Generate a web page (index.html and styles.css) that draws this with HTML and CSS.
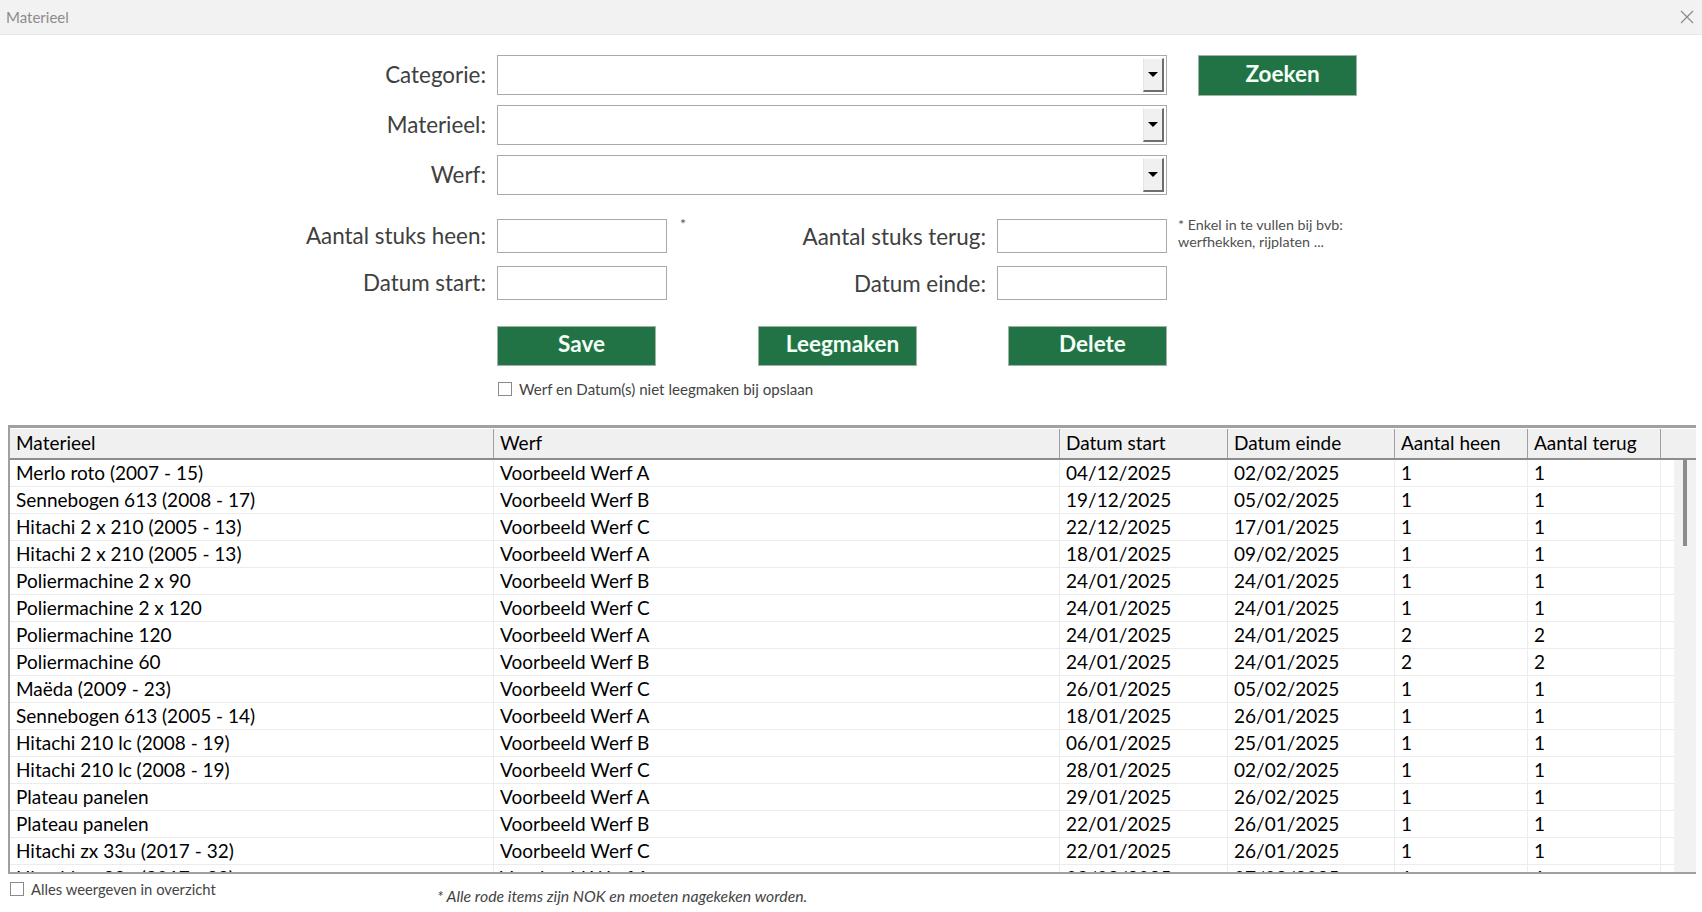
FILE: index.html
```html
<!DOCTYPE html>
<html lang="nl">
<head>
<meta charset="utf-8">
<title>Materieel</title>
<link rel="stylesheet" href="styles.css">
</head>
<body>
<div class="window">
  <div class="titlebar">
    <span class="title">Materieel</span>
    <svg class="close" width="14" height="14" viewBox="0 0 14 14"><path d="M1 1L13 13M13 1L1 13" stroke="#8a8a8a" stroke-width="1.2" fill="none"/></svg>
  </div>

  <div class="form">
    <div class="selrow">
      <label class="lbl">Categorie:</label>
      <div class="select"><span class="drop"><span class="arrow"></span></span></div>
      <button class="btn btn-zoek">Zoeken</button>
    </div>
    <div class="selrow">
      <label class="lbl">Materieel:</label>
      <div class="select"><span class="drop"><span class="arrow"></span></span></div>
    </div>
    <div class="selrow">
      <label class="lbl">Werf:</label>
      <div class="select"><span class="drop"><span class="arrow"></span></span></div>
    </div>

    <div class="numrow first">
      <label class="lbl">Aantal stuks heen:</label>
      <div class="input"></div>
      <div class="mid"><span class="star">*</span><label class="lbl2">Aantal stuks terug:</label></div>
      <div class="input"></div>
      <div class="note">* Enkel in te vullen bij bvb:<br>werfhekken, rijplaten ...</div>
    </div>
    <div class="numrow">
      <label class="lbl">Datum start:</label>
      <div class="input"></div>
      <div class="mid"><label class="lbl2">Datum einde:</label></div>
      <div class="input"></div>
    </div>

    <div class="btnrow">
      <button class="btn btn-save">Save</button>
      <button class="btn btn-leeg">Leegmaken</button>
      <button class="btn btn-del">Delete</button>
    </div>
    <div class="chkrow">
      <span class="chk"></span><span class="chktext">Werf en Datum(s) niet leegmaken bij opslaan</span>
    </div>
  </div>

  <div class="grid">
    <div class="ghead">
      <div class="c c1">Materieel</div>
      <div class="c c2">Werf</div>
      <div class="c c3">Datum start</div>
      <div class="c c4">Datum einde</div>
      <div class="c c5">Aantal heen</div>
      <div class="c c6">Aantal terug</div>
      <div class="c c7"></div>
    </div>
    <div class="gbody">
      <div class="rows">
        <div class="row"><div class="c c1">Merlo roto (2007 - 15)</div><div class="c c2">Voorbeeld Werf A</div><div class="c c3">04/12/2025</div><div class="c c4">02/02/2025</div><div class="c c5">1</div><div class="c c6">1</div></div>
        <div class="row"><div class="c c1">Sennebogen 613 (2008 - 17)</div><div class="c c2">Voorbeeld Werf B</div><div class="c c3">19/12/2025</div><div class="c c4">05/02/2025</div><div class="c c5">1</div><div class="c c6">1</div></div>
        <div class="row"><div class="c c1">Hitachi 2 x 210 (2005 - 13)</div><div class="c c2">Voorbeeld Werf C</div><div class="c c3">22/12/2025</div><div class="c c4">17/01/2025</div><div class="c c5">1</div><div class="c c6">1</div></div>
        <div class="row"><div class="c c1">Hitachi 2 x 210 (2005 - 13)</div><div class="c c2">Voorbeeld Werf A</div><div class="c c3">18/01/2025</div><div class="c c4">09/02/2025</div><div class="c c5">1</div><div class="c c6">1</div></div>
        <div class="row"><div class="c c1">Poliermachine 2 x 90</div><div class="c c2">Voorbeeld Werf B</div><div class="c c3">24/01/2025</div><div class="c c4">24/01/2025</div><div class="c c5">1</div><div class="c c6">1</div></div>
        <div class="row"><div class="c c1">Poliermachine 2 x 120</div><div class="c c2">Voorbeeld Werf C</div><div class="c c3">24/01/2025</div><div class="c c4">24/01/2025</div><div class="c c5">1</div><div class="c c6">1</div></div>
        <div class="row"><div class="c c1">Poliermachine 120</div><div class="c c2">Voorbeeld Werf A</div><div class="c c3">24/01/2025</div><div class="c c4">24/01/2025</div><div class="c c5">2</div><div class="c c6">2</div></div>
        <div class="row"><div class="c c1">Poliermachine 60</div><div class="c c2">Voorbeeld Werf B</div><div class="c c3">24/01/2025</div><div class="c c4">24/01/2025</div><div class="c c5">2</div><div class="c c6">2</div></div>
        <div class="row"><div class="c c1">Maëda (2009 - 23)</div><div class="c c2">Voorbeeld Werf C</div><div class="c c3">26/01/2025</div><div class="c c4">05/02/2025</div><div class="c c5">1</div><div class="c c6">1</div></div>
        <div class="row"><div class="c c1">Sennebogen 613 (2005 - 14)</div><div class="c c2">Voorbeeld Werf A</div><div class="c c3">18/01/2025</div><div class="c c4">26/01/2025</div><div class="c c5">1</div><div class="c c6">1</div></div>
        <div class="row"><div class="c c1">Hitachi 210 lc (2008 - 19)</div><div class="c c2">Voorbeeld Werf B</div><div class="c c3">06/01/2025</div><div class="c c4">25/01/2025</div><div class="c c5">1</div><div class="c c6">1</div></div>
        <div class="row"><div class="c c1">Hitachi 210 lc (2008 - 19)</div><div class="c c2">Voorbeeld Werf C</div><div class="c c3">28/01/2025</div><div class="c c4">02/02/2025</div><div class="c c5">1</div><div class="c c6">1</div></div>
        <div class="row"><div class="c c1">Plateau panelen</div><div class="c c2">Voorbeeld Werf A</div><div class="c c3">29/01/2025</div><div class="c c4">26/02/2025</div><div class="c c5">1</div><div class="c c6">1</div></div>
        <div class="row"><div class="c c1">Plateau panelen</div><div class="c c2">Voorbeeld Werf B</div><div class="c c3">22/01/2025</div><div class="c c4">26/01/2025</div><div class="c c5">1</div><div class="c c6">1</div></div>
        <div class="row"><div class="c c1">Hitachi zx 33u (2017 - 32)</div><div class="c c2">Voorbeeld Werf C</div><div class="c c3">22/01/2025</div><div class="c c4">26/01/2025</div><div class="c c5">1</div><div class="c c6">1</div></div>
        <div class="row"><div class="c c1">Hitachi zx 33u (2017 - 32)</div><div class="c c2">Voorbeeld Werf A</div><div class="c c3">03/02/2025</div><div class="c c4">07/02/2025</div><div class="c c5">1</div><div class="c c6">1</div></div>
      </div>
      <div class="vscroll"><div class="thumb"></div></div>
    </div>
  </div>

  <div class="footer">
    <div class="fchk"><span class="chk"></span><span class="chktext">Alles weergeven in overzicht</span></div>
    <div class="fnote">* Alle rode items zijn NOK en moeten nagekeken worden.</div>
  </div>
</div>
</body>
</html>
```

FILE: styles.css
```css
* { box-sizing: border-box; }
html, body { margin: 0; padding: 0; background: #ffffff; }
body {
  width: 1702px;
  height: 912px;
  overflow: hidden;
  font-family: Lato, "Open Sans", "Liberation Sans", sans-serif;
  color: #000;
}
.window { width: 1702px; height: 912px; display: flex; flex-direction: column; }

.titlebar {
  height: 35px;
  flex: none;
  background: #f2f2f2;
  border-bottom: 1px solid #e8e8e8;
  display: flex;
  align-items: center;
  justify-content: space-between;
  padding: 0 8px 0 6px;
}
.title { font-size: 15px; color: #8c8c8c; }
.close { display: block; }

.form { padding-top: 20px; flex: none; }
.selrow { display: flex; align-items: flex-start; height: 40px; margin-bottom: 10px; }
.lbl {
  width: 486px;
  flex: none;
  text-align: right;
  font-size: 22.4px;
  color: #404040;
  line-height: 40px;
}
.select {
  margin-left: 11px;
  width: 670px;
  height: 40px;
  border: 1px solid #a9a9a9;
  background: #fff;
  display: flex;
  justify-content: flex-end;
  padding: 2px 2px 2px 0;
}
.drop {
  width: 21px;
  height: 100%;
  background: #f0f0f0;
  border-left: 1px solid #e3e3e3;
  border-top: 1px solid #fdfdfd;
  border-right: 2px solid #6e6e6e;
  border-bottom: 2px solid #6e6e6e;
  display: flex;
  align-items: center;
  justify-content: center;
}
.arrow {
  width: 0; height: 0;
  border-left: 5px solid transparent;
  border-right: 5px solid transparent;
  border-top: 5px solid #000;
}

.btn {
  font-family: Lato, "Open Sans", sans-serif;
  font-weight: bold;
  font-size: 22.5px;
  color: #f4fff6;
  background: #217346;
  border: 1px solid #9fb4a7;
  width: 159px;
  height: 40px;
  padding: 0 0 5px 10px;
  margin: 0;
}
.btn-zoek { margin-left: 31px; height: 41px; }

.numrow { display: flex; align-items: center; height: 34px; margin-bottom: 13px; }
.numrow.first { margin-top: 24px; }
.numrow .lbl { line-height: 34px; }
.input {
  margin-left: 11px;
  width: 170px;
  height: 34px;
  border: 1px solid #a9a9a9;
  background: #fff;
  flex: none;
}
.mid {
  width: 319px;
  flex: none;
  display: flex;
  align-items: center;
  justify-content: space-between;
  height: 34px;
}
.star { align-self: flex-start; font-size: 14px; color: #555; margin-left: 13px; margin-top: -4px; }
.lbl2 { margin-left: auto; font-size: 22.4px; color: #404040; }
.note { margin-left: 11px; font-size: 14.3px; color: #505050; line-height: 17px; align-self: flex-start; margin-top: -3px; }

.btnrow { display: flex; margin-top: 26px; padding-left: 497px; }
.btn-leeg { margin-left: 102px; }
.btn-del { margin-left: 91px; }

.chkrow { display: flex; align-items: center; padding-left: 498px; margin-top: 16px; height: 14px; }
.chk {
  width: 14px; height: 14px;
  border: 1px solid #8a8a8a;
  background: #fff;
  flex: none;
}
.chktext { margin-left: 7px; font-size: 15.1px; color: #444; }

.grid {
  margin: 29px 6px 0 8px;
  height: 449px;
  flex: none;
  border-top: 3px solid #a0a0a0;
  border-left: 2px solid #a0a0a0;
  border-bottom: 2px solid #a0a0a0;
  display: flex;
  flex-direction: column;
  overflow: hidden;
}
.ghead {
  display: flex;
  height: 32px;
  flex: none;
  background: #f0f0f0;
  border-bottom: 2px solid #8c8c8c;
  border-top: 1px solid #fff;
}
.c {
  padding-left: 6px;
  font-size: 19px;
  white-space: nowrap;
  overflow: hidden;
  flex: none;
}
.ghead .c { line-height: 28px; border-right: 1px solid #a0a0a0; }
.ghead .c7 { flex: 1; border-right: none; }
.c1 { width: 484px; }
.c2 { width: 566px; }
.c3 { width: 168px; }
.c4 { width: 167px; }
.c5 { width: 133px; }
.c6 { width: 133px; }

.gbody { flex: 1; display: flex; overflow: hidden; }
.rows { width: 1664px; flex: none; overflow: hidden; }
.row { display: flex; height: 27px; border-bottom: 1px solid #ececec; }
.row .c { line-height: 26px; border-right: 1px solid #ececec; height: 26px; }
.vscroll { flex: 1; background: #f2f2f2; display: flex; justify-content: center; }
.thumb { width: 4px; height: 88px; background: #8c8c8c; margin-top: -2px; }

.footer { display: flex; align-items: flex-start; padding-top: 6px; }
.fchk { display: flex; align-items: center; padding-left: 10px; width: 437px; flex: none; }
.fchk .chktext { font-size: 14.8px; }
.fnote { font-style: italic; font-size: 15.8px; color: #444; margin-top: 6px; }
```
